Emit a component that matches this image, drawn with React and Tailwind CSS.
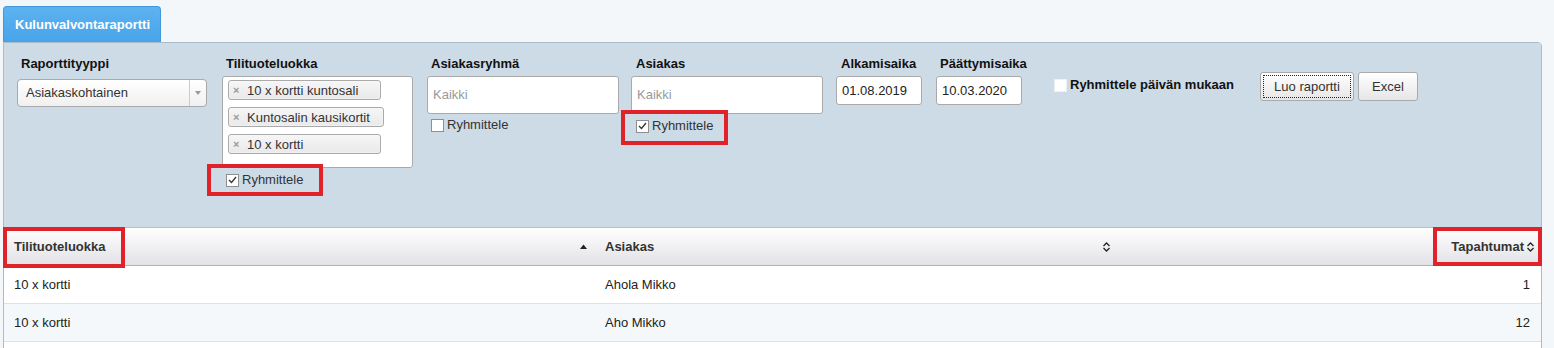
import React from 'react'

const font = { fontFamily: '"Liberation Sans", Arial, sans-serif' }

function CheckBox({ checked, light }) {
  return (
    <span
      className={
        'w-[13px] h-[13px] bg-white flex items-center justify-center shrink-0 ' +
        (light ? 'border border-[#eef1f4]' : 'border border-[#8e8f8f]')
      }
    >
      {checked && (
        <svg width="9" height="8" viewBox="0 0 9 8">
          <path d="M1 4 L3.5 6.5 L8 1" fill="none" stroke="#333" strokeWidth="1.3" />
        </svg>
      )}
    </span>
  )
}

function Chip({ label, width }) {
  return (
    <div
      className={
        'h-[20px] flex items-center border border-[#aaa] rounded-[3px] bg-gradient-to-b from-[#f6f6f6] to-[#e9e9e9] shadow-[0_0_2px_#fff_inset] pl-[4px] ' +
        width
      }
    >
      <span className="text-[#999] text-[11px] font-bold leading-none w-[14px]">×</span>
      <span className="text-[13px] text-[#333] leading-none whitespace-nowrap">{label}</span>
    </div>
  )
}

function SortBoth() {
  return (
    <svg width="7" height="10" viewBox="0 0 7 10" className="shrink-0">
      <path d="M0.5 4 L3.5 1 L6.5 4" fill="none" stroke="#222" strokeWidth="1.3" />
      <path d="M0.5 6 L3.5 9 L6.5 6" fill="none" stroke="#222" strokeWidth="1.3" />
    </svg>
  )
}

function SortUp() {
  return (
    <svg width="7" height="5" viewBox="0 0 7 5" className="shrink-0">
      <path d="M0 5 L3.5 0.5 L7 5 Z" fill="#222" />
    </svg>
  )
}

const rows = [
  { luokka: '10 x kortti', asiakas: 'Ahola Mikko', count: 1 },
  { luokka: '10 x kortti', asiakas: 'Aho Mikko', count: 12 },
]

export default function App() {
  return (
    <div className="min-h-screen bg-[#f4f7fa] pt-[6px] pl-[3px]" style={font}>
      {/* Tab */}
      <div className="w-[158px] h-[36px] rounded-t-[4px] bg-gradient-to-b from-[#5db2f0] to-[#48a4ea] border border-b-0 border-[#3f98de] text-white font-bold text-[13px] flex items-center pl-[11px] pt-[1px]">
        Kulunvalvontaraportti
      </div>

      <div className="w-[1539px] border border-[#a8bccd] rounded-tr-[4px]">
        {/* Filters */}
        <div className="bg-[#cddbe6] h-[184px] flex items-start pl-[13px] pt-[13px] rounded-tr-[3px] text-[13px] text-[#333]">
          {/* Raporttityyppi */}
          <div className="w-[190px] flex flex-col">
            <div className="pl-[4px] font-bold text-[#111] leading-[16px]">Raporttityyppi</div>
            <div className="mt-[7px] h-[28px] border border-[#aaa] rounded-[4px] bg-gradient-to-b from-white to-[#f0f0f0] flex items-stretch">
              <div className="flex-1 flex items-center pl-[8px] text-[#333]">Asiakaskohtainen</div>
              <div className="w-[17px] border-l border-[#ccc] flex items-center justify-center">
                <svg width="6" height="4" viewBox="0 0 6 4">
                  <path d="M0 0 L6 0 L3 4 Z" fill="#999" />
                </svg>
              </div>
            </div>
          </div>

          {/* Tilituoteluokka */}
          <div className="w-[191px] ml-[15px] flex flex-col">
            <div className="pl-[4px] font-bold text-[#111] leading-[16px]">Tilituoteluokka</div>
            <div className="mt-[4px] h-[92px] bg-white border border-[#aaa] rounded-[3px] pl-[5px] pt-[3px] flex flex-col items-start gap-[7px]">
              <Chip label="10 x kortti kuntosali" width="w-[153px]" />
              <Chip label="Kuntosalin kausikortit" width="pr-[13px]" />
              <Chip label="10 x kortti" width="w-[153px]" />
            </div>
            <label className="relative mt-[5px] ml-[4px] flex items-center gap-[3px] leading-[14px]">
              <CheckBox checked />
              <span>Ryhmittele</span>
              <span className="absolute -left-[19px] -top-[9px] w-[116px] h-[32px] border-4 border-[#e0222b]" />
            </label>
          </div>

          {/* Asiakasryhmä */}
          <div className="w-[192px] ml-[14px] flex flex-col">
            <div className="pl-[4px] font-bold text-[#111] leading-[16px]">Asiakasryhmä</div>
            <div className="mt-[4px] h-[38px] bg-white border border-[#aaa] rounded-[3px] flex items-center pl-[5px] text-[#999]">
              Kaikki
            </div>
            <label className="mt-[4px] ml-[4px] flex items-center gap-[3px] leading-[14px]">
              <CheckBox />
              <span>Ryhmittele</span>
            </label>
          </div>

          {/* Asiakas */}
          <div className="w-[192px] ml-[12px] flex flex-col">
            <div className="pl-[5px] font-bold text-[#111] leading-[16px]">Asiakas</div>
            <div className="mt-[4px] h-[38px] bg-white border border-[#aaa] rounded-[3px] flex items-center pl-[5px] text-[#999]">
              Kaikki
            </div>
            <label className="relative mt-[5px] ml-[5px] flex items-center gap-[3px] leading-[14px]">
              <CheckBox checked />
              <span>Ryhmittele</span>
              <span className="absolute -left-[15px] -top-[9px] w-[107px] h-[35px] border-4 border-[#e0222b]" />
            </label>
          </div>

          {/* Alkamisaika */}
          <div className="w-[86px] ml-[13px] flex flex-col">
            <div className="pl-[5px] font-bold text-[#111] leading-[16px]">Alkamisaika</div>
            <div className="mt-[4px] h-[29px] bg-white border border-[#aaa] rounded-[3px] flex items-center pl-[5px] text-[#222]">
              01.08.2019
            </div>
          </div>

          {/* Päättymisaika */}
          <div className="w-[86px] ml-[14px] flex flex-col">
            <div className="pl-[4px] font-bold text-[#111] leading-[16px] whitespace-nowrap">Päättymisaika</div>
            <div className="mt-[4px] h-[29px] bg-white border border-[#aaa] rounded-[3px] flex items-center pl-[5px] text-[#222]">
              10.03.2020
            </div>
          </div>

          {/* Ryhmittele päivän mukaan */}
          <label className="w-[206px] ml-[32px] mt-[22px] flex items-center gap-[3px] font-bold text-[#111] leading-[14px]">
            <CheckBox light />
            <span>Ryhmittele päivän mukaan</span>
          </label>

          {/* Buttons */}
          <div className="mt-[16px] flex gap-[4px]">
            <button className="h-[29px] w-[94px] border border-[#aaa] rounded-[3px] bg-gradient-to-b from-white to-[#e6e6e6] p-[2px]">
              <span className="w-full h-full flex items-center justify-center outline outline-1 outline-dotted outline-[#222] -outline-offset-1 text-[#333]">
                Luo raportti
              </span>
            </button>
            <button className="h-[29px] w-[60px] border border-[#aaa] rounded-[3px] bg-gradient-to-b from-white to-[#e6e6e6] flex items-center justify-center text-[#333]">
              Excel
            </button>
          </div>
        </div>

        {/* Table */}
        <div className="text-[13px]">
          <div className="relative h-[39px] flex border-t border-b border-t-[#b2c0cc] border-b-[#a9b5c1] bg-gradient-to-b from-white to-[#e2e2e7] font-bold text-[#333]">
            <div className="w-[591px] flex items-center justify-between pl-[10px] pr-[8px]">
              <span>Tilituoteluokka</span>
              <SortUp />
            </div>
            <div className="w-[523px] flex items-center justify-between pl-[10px] pr-[8px]">
              <span>Asiakas</span>
              <SortBoth />
            </div>
            <div className="flex-1 flex items-center justify-end gap-[3px] pr-[7px]">
              <span>Tapahtumat</span>
              <SortBoth />
            </div>
            <span className="absolute -left-[1px] -top-[1px] w-[122px] h-[41px] border-4 border-[#e0222b]" />
            <span className="absolute -right-[1px] -top-[1px] w-[109px] h-[39px] border-4 border-[#e0222b]" />
          </div>

          {rows.map((r, i) => (
            <div
              key={i}
              className={
                'h-[38px] flex border-b border-[#dce2e7] text-[#222] ' +
                (i % 2 === 0 ? 'bg-white' : 'bg-[#f5f8fb]')
              }
            >
              <div className="w-[591px] flex items-center pl-[10px]">{r.luokka}</div>
              <div className="w-[523px] flex items-center pl-[10px]">{r.asiakas}</div>
              <div className="flex-1 flex items-center justify-end pr-[11px]">{r.count}</div>
            </div>
          ))}
          <div className="h-[38px] bg-white" />
        </div>
      </div>
    </div>
  )
}
